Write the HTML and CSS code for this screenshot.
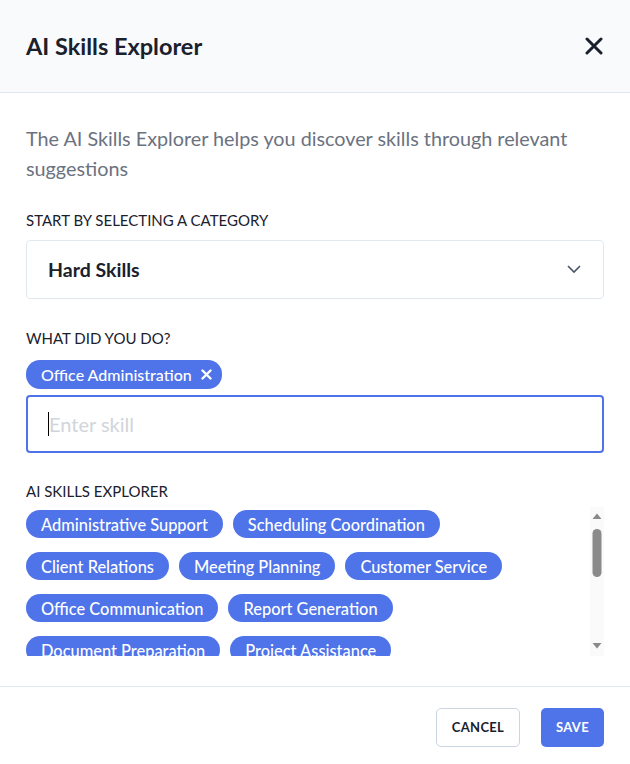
FILE: index.html
```html
<!DOCTYPE html>
<html lang="en">
<head>
    <meta charset="UTF-8">
    <meta name="viewport" content="width=device-width, initial-scale=1.0">
    <title>AI Skills Explorer</title>
    <link rel="stylesheet" href="styles.css">
</head>
<body>

    <div class="modal">
        <!-- En-tete -->
        <div class="modal-header">
            <h2>AI Skills Explorer</h2>
            <button class="close-btn" aria-label="Close">
                <svg width="18" height="18" viewBox="0 0 18 18"><path d="M2 2 L16 16 M16 2 L2 16" stroke="#1a202c" stroke-width="3" stroke-linecap="round"/></svg>
            </button>
        </div>

        <div class="modal-body">
            <p class="intro">The AI Skills Explorer helps you discover skills through relevant suggestions</p>

            <div class="field-label">START BY SELECTING A CATEGORY</div>
            <div class="select-box">
                <span>Hard Skills</span>
                <svg width="14" height="9" viewBox="0 0 14 9"><path d="M1 1 L7 7 L13 1" fill="none" stroke="#4a5568" stroke-width="1.6"/></svg>
            </div>

            <div class="field-label">WHAT DID YOU DO?</div>
            <div class="selected">
                <span class="chip">Office Administration
                    <svg class="chip-x" width="11" height="11" viewBox="0 0 11 11"><path d="M1.5 1.5 L9.5 9.5 M9.5 1.5 L1.5 9.5" stroke="#fff" stroke-width="2.4" stroke-linecap="round"/></svg>
                </span>
            </div>
            <div class="skill-input">
                <span class="caret"></span>
                <span class="placeholder">Enter skill</span>
            </div>

            <div class="field-label">AI SKILLS EXPLORER</div>
            <div class="suggest">
                <div class="chips">
                    <span class="chip">Administrative Support</span>
                    <span class="chip">Scheduling Coordination</span>
                    <span class="chip">Client Relations</span>
                    <span class="chip">Meeting Planning</span>
                    <span class="chip">Customer Service</span>
                    <span class="chip">Office Communication</span>
                    <span class="chip">Report Generation</span>
                    <span class="chip">Document Preparation</span>
                    <span class="chip">Project Assistance</span>
                </div>
                <div class="scrollbar">
                    <svg width="14" height="150" viewBox="0 0 14 150">
                        <path d="M2.5 12 L7 6.5 L11.5 12 Z" fill="#8a8a8a"/>
                        <rect x="2.5" y="22" width="9" height="48" rx="4.5" fill="#8a8a8a"/>
                        <path d="M2.5 136 L7 141.5 L11.5 136 Z" fill="#8a8a8a"/>
                    </svg>
                </div>
            </div>
        </div>

        <div class="modal-footer">
            <button class="btn btn-cancel">CANCEL</button>
            <button class="btn btn-save">SAVE</button>
        </div>
    </div>

</body>
</html>
```

FILE: styles.css
```css
body {
    margin: 0;
    font-family: Lato, "Liberation Sans", sans-serif;
    background-color: #fff;
    color: #1a202c;
}

.modal {
    width: 630px;
    height: 764px;
    display: flex;
    flex-direction: column;
}

.modal-header {
    height: 93px;
    flex-shrink: 0;
    box-sizing: border-box;
    background-color: #f8fafc;
    border-bottom: 1px solid #e2e8f0;
    display: flex;
    align-items: center;
    justify-content: space-between;
    padding: 0 27px 0 26px;
}

.modal-header h2 {
    margin: 0;
    font-size: 23.5px;
    font-weight: 700;
    color: #1a202c;
}

.close-btn {
    background: none;
    border: none;
    padding: 0;
    display: flex;
    cursor: pointer;
}

.modal-body {
    flex: 1;
    padding: 30px 26px 0 26px;
}

.intro {
    margin: 0;
    font-size: 19.8px;
    line-height: 30px;
    color: #6b7280;
}

.field-label {
    font-size: 15px;
    line-height: 20px;
    color: #1a202c;
}

.intro + .field-label {
    margin-top: 27px;
}

.select-box {
    margin-top: 10px;
    height: 59px;
    box-sizing: border-box;
    border: 1px solid #e2e8f0;
    border-radius: 4px;
    display: flex;
    align-items: center;
    justify-content: space-between;
    padding: 0 22px 0 21px;
    font-size: 19.5px;
    font-weight: 700;
    margin-bottom: 29px;
}

.selected {
    margin-top: 12px;
    display: flex;
}

.chip {
    display: inline-flex;
    align-items: center;
    height: 28px;
    padding: 0 15px;
    border-radius: 14px;
    background-color: #4f73e8;
    color: #fff;
    font-size: 16.4px;
    font-weight: 500;
    white-space: nowrap;
}

.selected .chip {
    height: 29px;
    padding-right: 10px;
    font-size: 16px;
}

.chip-x {
    margin-left: 9px;
}

.skill-input {
    margin-top: 6px;
    height: 58px;
    box-sizing: border-box;
    border: 2px solid #4f73e8;
    border-radius: 4px;
    display: flex;
    align-items: center;
    padding: 0 20px;
    margin-bottom: 28px;
}

.caret {
    width: 1px;
    height: 24px;
    background-color: #000;
}

.placeholder {
    font-size: 20px;
    color: #d1d5db;
}

.suggest {
    margin-top: 6px;
    display: flex;
    justify-content: space-between;
    height: 149px;
}

.chips {
    flex: 1;
    overflow: hidden;
    display: flex;
    flex-wrap: wrap;
    align-content: flex-start;
    gap: 14px 10px;
    padding-top: 3px;
}

.scrollbar {
    width: 14px;
    background-color: #fafafa;
    margin-left: 10px;
}

.modal-footer {
    border-top: 1px solid #e2e8f0;
    height: 78px;
    flex-shrink: 0;
    box-sizing: border-box;
    display: flex;
    justify-content: flex-end;
    align-items: center;
    gap: 21px;
    padding: 3px 26px 0 0;
}

.btn {
    height: 39px;
    border-radius: 5px;
    font-family: Lato, "Liberation Sans", sans-serif;
    font-size: 13px;
    font-weight: 700;
    letter-spacing: 0.3px;
    cursor: pointer;
}

.btn-cancel {
    width: 84px;
    background-color: #fff;
    border: 1px solid #cbd5e1;
    color: #1a202c;
}

.btn-save {
    width: 63px;
    background-color: #4f73e8;
    border: none;
    color: #fff;
}
```
